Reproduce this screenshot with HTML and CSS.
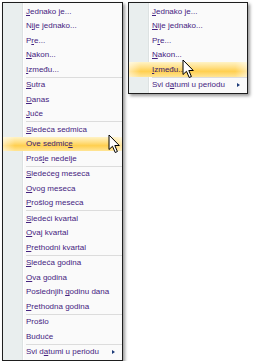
FILE: index.html
```html
<!DOCTYPE html>
<html lang="en">
<head>
    <meta charset="UTF-8">
    <title>Filter datuma</title>
    <link rel="stylesheet" href="styles.css">
</head>
<body>
    <div class="screen">
        <div class="menu menu-main">
            <div class="item"><span><u>J</u>ednako je...</span></div>
            <div class="item"><span>N<u>i</u>je jednako...</span></div>
            <div class="item"><span>P<u>r</u>e...</span></div>
            <div class="item"><span><u>N</u>akon...</span></div>
            <div class="item"><span><u>I</u>zmeđu...</span></div>
            <div class="sep"></div>
            <div class="item"><span><u>S</u>utra</span></div>
            <div class="item"><span><u>D</u>anas</span></div>
            <div class="item"><span><u>J</u>uče</span></div>
            <div class="sep"></div>
            <div class="item"><span><u>S</u>ledeća sedmica</span></div>
            <div class="item hot"><span>Ove sedmic<u>e</u></span>
                <svg class="pointer" width="13" height="20" viewBox="0 0 13 20"><path d="M1 1 L1 15.5 L4.5 12.3 L7.2 18.5 L9.4 17.5 L6.8 11.5 L11.3 11.5 Z" fill="#fff" stroke="#000" stroke-width="1" stroke-linejoin="round"/></svg>
            </div>
            <div class="item"><span>Proš<u>l</u>e nedelje</span></div>
            <div class="sep"></div>
            <div class="item"><span><u>S</u>ledećeg meseca</span></div>
            <div class="item"><span><u>O</u>vog meseca</span></div>
            <div class="item"><span><u>P</u>rošlog meseca</span></div>
            <div class="sep"></div>
            <div class="item"><span><u>S</u>ledeći kvartal</span></div>
            <div class="item"><span><u>O</u>vaj kvartal</span></div>
            <div class="item"><span><u>P</u>rethodni kvartal</span></div>
            <div class="sep"></div>
            <div class="item"><span><u>S</u>ledeća godina</span></div>
            <div class="item"><span><u>O</u>va godina</span></div>
            <div class="item"><span>Poslednjih <u>g</u>odinu dana</span></div>
            <div class="item"><span><u>P</u>rethodna godina</span></div>
            <div class="sep"></div>
            <div class="item"><span>Prošlo</span></div>
            <div class="item"><span>Buduće</span></div>
            <div class="sep"></div>
            <div class="item"><span>Svi d<u>a</u>tumi u periodu</span><span class="arrow"></span></div>
        </div>

        <div class="menu menu-side">
            <div class="item"><span><u>J</u>ednako je...</span></div>
            <div class="item"><span><u>N</u>ije jednako...</span></div>
            <div class="item"><span>P<u>r</u>e...</span></div>
            <div class="item"><span><u>N</u>akon...</span></div>
            <div class="item hot"><span><u>I</u>zmeđu...</span>
                <svg class="pointer" width="13" height="20" viewBox="0 0 13 20"><path d="M1 1 L1 15.5 L4.5 12.3 L7.2 18.5 L9.4 17.5 L6.8 11.5 L11.3 11.5 Z" fill="#fff" stroke="#000" stroke-width="1" stroke-linejoin="round"/></svg>
            </div>
            <div class="sep"></div>
            <div class="item"><span>Svi d<u>a</u>tumi u periodu</span><span class="arrow"></span></div>
        </div>
    </div>
</body>
</html>
```

FILE: styles.css
```css
body {
    margin: 0;
    background-color: #fff;
    font-family: "Liberation Sans", Arial, sans-serif;
}

.screen {
    display: flex;
    align-items: flex-start;
    gap: 5px;
    padding: 2px 0 0 2px;
}

.menu {
    border: 1px solid #1e1e1e;
    padding: 1px 0;
    background: linear-gradient(to right, #e9eeee 0, #e9eeee 19px, #dde2e2 19px, #dde2e2 20px, #fff 20px, #fff 21px, #fafafa 21px);
    box-shadow: 2px 2px 3px rgba(0, 0, 0, 0.4);
}

.menu-main {
    width: 119px;
}

.menu-side {
    width: 118px;
}

.item {
    position: relative;
    display: flex;
    align-items: center;
    height: 14.5px;
    padding-left: 23px;
    padding-right: 7px;
    font-size: 8px;
    color: #45237f;
    white-space: nowrap;
}

.item u {
    text-decoration-thickness: 1px;
    text-underline-offset: 1px;
}

.hot {
    background:
        linear-gradient(to right, rgba(255, 255, 255, 0.5), rgba(255, 255, 255, 0) 10%, rgba(255, 255, 255, 0) 90%, rgba(255, 255, 255, 0.5)),
        linear-gradient(to bottom, #fff3c6 0%, #ffe088 35%, #ffcf4f 62%, #ffe597 100%);
    color: #3a2070;
}

.sep {
    height: 1px;
    margin-left: 23px;
    background-color: #dcdcdc;
}

.arrow {
    margin-left: auto;
    width: 0;
    height: 0;
    border-top: 2.5px solid transparent;
    border-bottom: 2.5px solid transparent;
    border-left: 3px solid #1c3a78;
}

.pointer {
    position: absolute;
    top: -3px;
}

.menu-main .pointer {
    left: 105px;
}

.menu-side .pointer {
    left: 53px;
}
```
